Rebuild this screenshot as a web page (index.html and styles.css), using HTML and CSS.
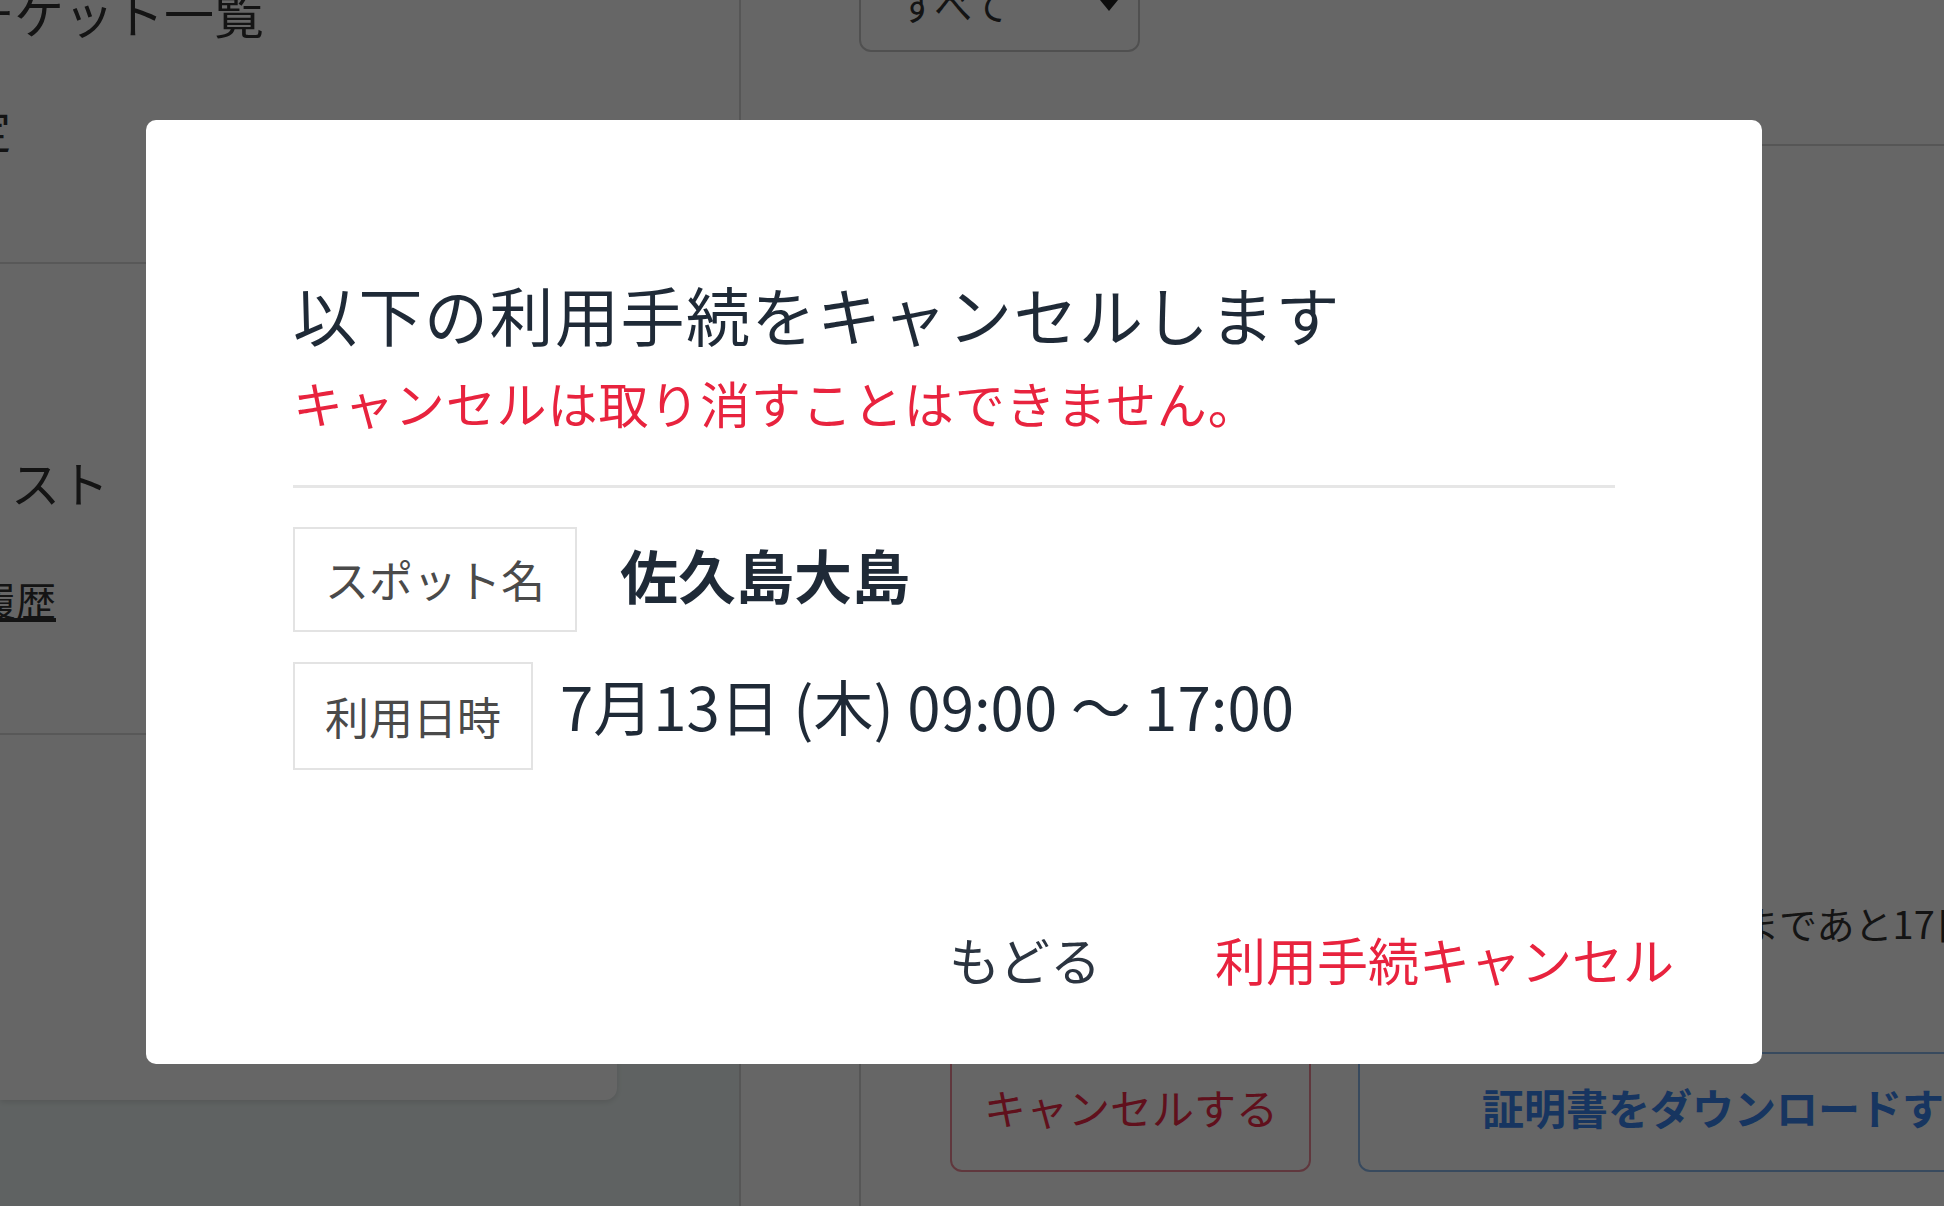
FILE: index.html
```html
<!DOCTYPE html>
<html lang="ja">
<head>
<meta charset="utf-8">
<title>利用手続キャンセル</title>
<link rel="stylesheet" href="styles.css">
</head>
<body>
<div class="page">
  <aside class="sidebar">
    <div class="side-group top">
      <div class="side-item first">チケット一覧</div>
      <div class="side-item second">各種設定</div>
    </div>
    <div class="side-group mid">
      <div class="side-item list">お気に入りリスト</div>
      <a class="side-link">利用履歴</a>
    </div>
  </aside>
  <div class="strip"></div>
  <main class="main">
    <div class="toolbar">
      <div class="select"><span class="select-text">すべて</span><span class="caret"></span></div>
    </div>
    <section class="card">
      <p class="deadline">キャンセル期限まであと17日</p>
      <div class="actions">
        <button class="btn btn-cancel">キャンセルする</button>
        <button class="btn btn-download">証明書をダウンロードする</button>
      </div>
    </section>
  </main>
</div>

<div class="overlay">
  <div class="modal">
    <div class="modal-body">
      <h2 class="modal-title">以下の利用手続をキャンセルします</h2>
      <p class="modal-warning">キャンセルは取り消すことはできません。</p>
      <hr class="divider">
      <div class="row row-spot">
        <span class="label">スポット名</span>
        <span class="value value-spot">佐久島大島</span>
      </div>
      <div class="row row-date">
        <span class="label label-date">利用日時</span>
        <span class="value value-date">7月13日 (木) 09:00 〜 17:00</span>
      </div>
    </div>
    <div class="modal-footer">
      <button class="link-btn back">もどる</button>
      <button class="link-btn danger">利用手続キャンセル</button>
    </div>
  </div>
</div>
</body>
</html>
```

FILE: styles.css
```css
* { box-sizing: border-box; }

html, body {
  margin: 0;
  padding: 0;
}

body {
  width: 1944px;
  height: 1206px;
  overflow: hidden;
  font-family: "Noto Sans CJK JP", "Noto Sans", sans-serif;
  color: #333;
  background: #eef6f5;
}

.page {
  display: flex;
  height: 1206px;
}

/* ---------- sidebar ---------- */
.sidebar {
  width: 617px;
  height: 1100px;
  flex: none;
  background: #ffffff;
  border-radius: 0 0 12px 0;
  box-shadow: 0 2px 6px rgba(0, 0, 0, 0.12);
  overflow: hidden;
  display: flex;
  flex-direction: column;
}

.side-group {
  border-bottom: 2px solid #dcdcdc;
  flex: none;
}

.side-group.top { height: 264px; }
.side-group.mid { height: 471px; padding-top: 188px; }

.side-item {
  white-space: nowrap;
  color: #333;
  font-size: 46px;
  line-height: 60px;
}

.side-item.first {
  font-size: 50px;
  margin-top: -18px;
  margin-left: -36px;
}

.side-item.second {
  margin-top: 56px;
  margin-left: -173px;
}

.side-item.list {
  font-size: 49px;
  margin-left: -283px;
}

.side-link {
  display: block;
  white-space: nowrap;
  font-size: 40px;
  line-height: 50px;
  margin-top: 62px;
  margin-left: -104px;
  color: #333;
  text-decoration: underline;
}

/* ---------- strip ---------- */
.strip {
  width: 124px;
  flex: none;
  border-right: 2px solid #d6d6d6;
  background: linear-gradient(#ffffff 0 140px, transparent 140px);
}

/* ---------- main ---------- */
.main {
  flex: 1;
  background: #ffffff;
  display: flex;
  flex-direction: column;
  min-width: 0;
}

.toolbar {
  height: 144px;
  flex: none;
}

.select {
  margin-left: 118px;
  margin-top: -48px;
  width: 281px;
  height: 100px;
  border: 2px solid #c8c8c8;
  border-radius: 12px;
  display: flex;
  align-items: center;
  justify-content: space-between;
  padding: 0 20px 0 38px;
}

.select-text {
  font-size: 38px;
  line-height: 40px;
  color: #333;
  margin-top: 4px;
}

.caret {
  width: 0;
  height: 0;
  border-left: 9px solid transparent;
  border-right: 9px solid transparent;
  border-top: 11px solid #222;
  margin-top: 6px;
}

.card {
  margin-left: 118px;
  flex: 1;
  border-top: 2px solid #d6d6d6;
  border-left: 2px solid #d6d6d6;
  padding-top: 748px;
  overflow: hidden;
}

.deadline {
  margin: 0 0 0 614px;
  white-space: nowrap;
  font-size: 38px;
  line-height: 57px;
  color: #333;
}

.actions {
  display: flex;
  gap: 47px;
  margin-top: 101px;
  margin-left: 89px;
}

.btn {
  flex: none;
  height: 120px;
  background: #fff;
  border-radius: 12px;
  font-family: inherit;
  font-size: 42px;
  padding: 0 32px 12px;
  white-space: nowrap;
}

.btn-cancel {
  width: 361px;
  border: 2px solid #f08a98;
  color: #f02a46;
}

.btn-download {
  width: 760px;
  border: 2px solid #8cb8ec;
  color: #3a86f0;
  font-weight: 700;
  text-align: left;
  padding-left: 122px;
}

/* ---------- overlay & modal ---------- */
.overlay {
  position: fixed;
  inset: 0;
  background: rgba(0, 0, 0, 0.6);
  padding: 120px 0 0 146px;
}

.modal {
  width: 1616px;
  height: 944px;
  background: #ffffff;
  border-radius: 10px;
  display: flex;
  flex-direction: column;
}

.modal-body {
  padding: 145px 147px 0;
}

.modal-title {
  margin: 0;
  font-size: 64px;
  font-weight: 400;
  line-height: 96px;
  letter-spacing: 1.5px;
  color: #1f2a37;
}

.modal-warning {
  margin: 4px 0 0;
  font-size: 50px;
  line-height: 75px;
  letter-spacing: 0.9px;
  color: #e8233e;
}

.divider {
  margin: 45px 0 0;
  border: 0;
  border-top: 3px solid #e6e6e6;
  height: 0;
}

.row {
  display: flex;
  align-items: flex-start;
}

.row-spot { margin-top: 39px; }
.row-date { margin-top: 30px; }

.label {
  border: 2px solid #e3e3e3;
  padding: 0 30px;
  font-size: 44px;
  line-height: 101px;
  color: #4a4a4a;
  white-space: nowrap;
}

.label-date { line-height: 104px; }

.value {
  color: #1f2a37;
  white-space: nowrap;
}

.value-spot {
  margin-left: 43px;
  font-size: 58px;
  font-weight: 700;
  line-height: 94px;
}

.value-date {
  margin-left: 27px;
  font-size: 60px;
  line-height: 86px;
}

.modal-footer {
  margin-top: auto;
  display: flex;
  justify-content: flex-end;
  gap: 114px;
  padding: 0 88px 68px 0;
}

.link-btn {
  background: none;
  border: 0;
  padding: 0;
  font-family: inherit;
  font-size: 51px;
  line-height: 74px;
  cursor: pointer;
}

.link-btn.back { color: #2b3440; }
.link-btn.danger { color: #e8233e; }
```
